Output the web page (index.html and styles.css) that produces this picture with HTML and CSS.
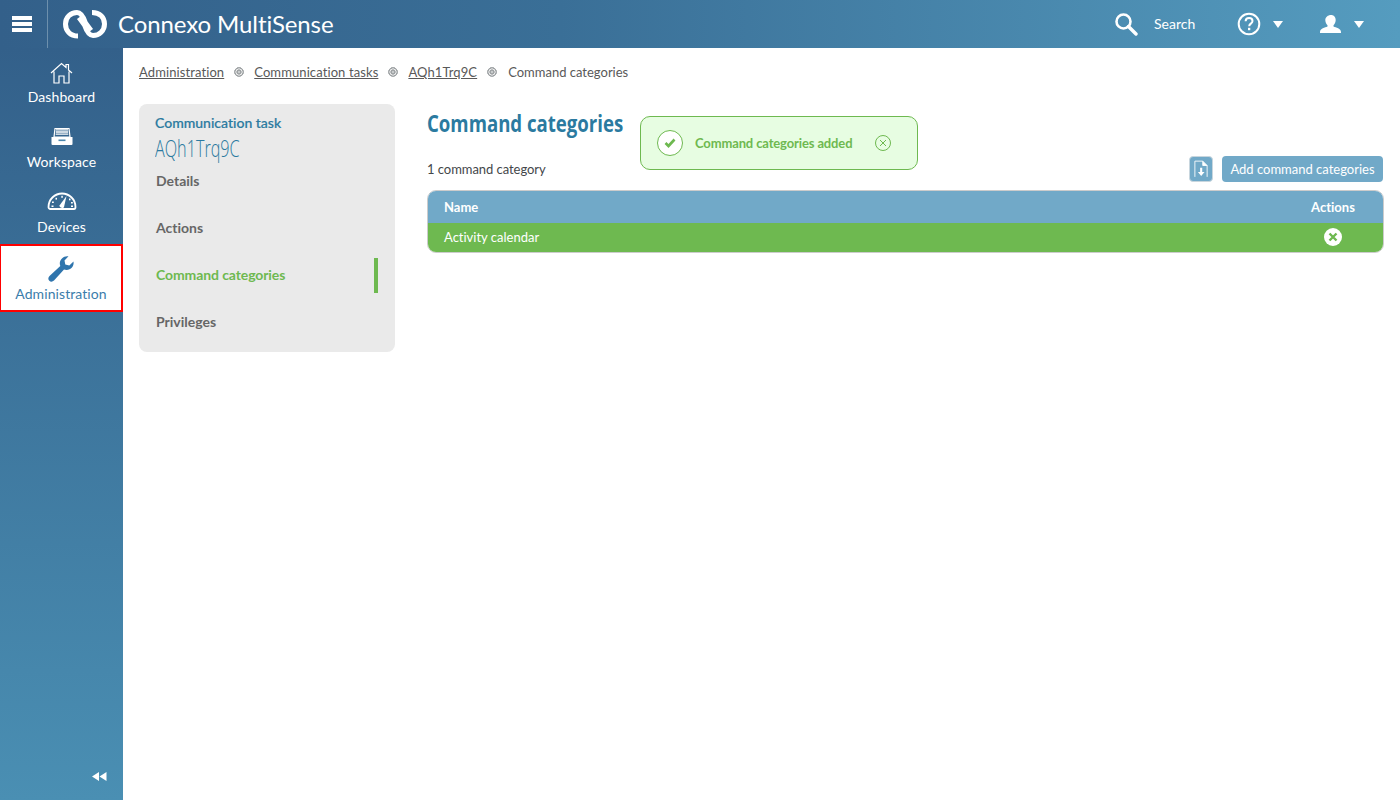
FILE: index.html
```html
<!DOCTYPE html>
<html lang="en">
<head>
<meta charset="utf-8">
<title>Command categories</title>
<link rel="stylesheet" href="styles.css">
</head>
<body>
<header class="topbar">
  <button class="burger" aria-label="Menu"><span></span><span></span><span></span></button>
  <div class="brand">
    <svg class="logo" width="46" height="30" viewBox="0 0 46 30"><path d="M16 27C8 27 3.500 21.500 3.500 15S8.500 3.500 15 3.500C19 3.500 21.500 8 23.500 14l5.500 7.500" fill="none" stroke="#fff" stroke-width="5"/><path d="M30 3.500C38 3.500 42.500 8.500 42.500 15S37.500 26.500 31 26.500C27 26.500 24.500 22 22.500 16l-5.500-7.500" fill="none" stroke="#fff" stroke-width="5"/></svg>
    <span class="brand-name">Connexo MultiSense</span>
  </div>
  <div class="top-actions">
    <div class="search">
      <svg width="24" height="24" viewBox="0 0 24 24"><circle cx="9.500" cy="9.500" r="7" fill="none" stroke="#fff" stroke-width="2.600"/><path d="M14.500 14.500L22 22" stroke="#fff" stroke-width="3.400" stroke-linecap="round"/></svg>
      <span class="search-text">Search</span>
    </div>
    <div class="help">
      <svg width="24" height="24" viewBox="0 0 24 24"><circle cx="12" cy="12" r="10.300" fill="none" stroke="#fff" stroke-width="2"/><path d="M8.600 9.300c0-2.100 1.500-3.300 3.500-3.300s3.400 1.200 3.400 3c0 2.700-3.300 2.600-3.300 5.200" fill="none" stroke="#fff" stroke-width="2"/><rect x="11" y="15.800" width="2.300" height="2.400" fill="#fff"/></svg>
      <i class="caret"></i>
    </div>
    <div class="user">
      <svg width="22" height="20" viewBox="0 0 22 20"><path d="M11 1c3 0 4.700 2.200 4.700 5 0 2.200-1 4.200-2.200 5.200v1.300c2.500 1 7.500 2 7.500 5.500v1H0v-1c0-3.500 5-4.500 7.500-5.500v-1.300C6.300 10.200 5.300 8.200 5.300 6c0-2.800 2.700-5 5.700-5z" fill="#fff"/></svg>
      <i class="caret"></i>
    </div>
  </div>
</header>
<div class="shell">
  <nav class="sidebar">
    <a class="nav-item">
      <svg width="24" height="24" viewBox="0 0 24 24"><path d="M1 12L11.500 2.500 16 6.500V3.500H18.500V9l3.500 3M4 10.500V22H9V15H14V22H19V10.500" fill="none" stroke="#fff" stroke-width="1.200"/></svg>
      <span>Dashboard</span>
    </a>
    <a class="nav-item">
      <svg width="24" height="24" viewBox="0 0 24 24"><path d="M5 2.500h14l1 8.500H4z" fill="none" stroke="#fff" stroke-width="1.200"/><path d="M6 3.800h12M5.900 6h12.200M5.700 8.200h12.600" stroke="#fff" stroke-width="1.300"/><path d="M1.500 11h21v7a1 1 0 0 1-1 1h-19a1 1 0 0 1-1-1z" fill="#fff"/><rect x="8.500" y="13.500" width="7" height="1.600" fill="#4a86ad"/></svg>
      <span>Workspace</span>
    </a>
    <a class="nav-item">
      <svg width="30" height="24" viewBox="0 0 30 24"><path d="M1.500 16C1.500 8 8 2.500 15 2.500S28.500 8 28.500 16c0 1-.5 2-1.500 2H3c-1 0-1.500-1-1.500-2z" fill="none" stroke="#fff" stroke-width="1.800"/><path d="M12.500 14.500L19.500 5 17 16c-.6 2-5 .6-4.500-1.500z" fill="#fff"/><g fill="#fff"><rect x="14.300" y="4.800" width="1.500" height="2"/><rect x="8.500" y="6.800" width="1.500" height="1.800"/><rect x="22" y="7.500" width="1.500" height="1.800"/><rect x="5" y="10.500" width="1.800" height="1.500"/><rect x="24" y="11" width="1.800" height="1.500"/><rect x="4.500" y="14.500" width="2" height="1.500"/><rect x="24" y="14.500" width="2" height="1.500"/></g></svg>
      <span>Devices</span>
    </a>
    <a class="nav-item active">
      <svg width="28" height="28" viewBox="0 0 28 28"><path d="M26.500 6.500c.8 4.500-2.500 8.500-7 8.500-1 0-1.800-.2-2.500-.5L7 25.500c-1.500 1.500-3.500 1.500-4.700.2C1 24.500 1 22.500 2.500 21l10.800-10c-.3-.8-.5-1.700-.5-2.500C12.800 4 17 .5 21.500 1.300l-4 4.200.8 4 4 .9z" fill="#2f75ad"/></svg>
      <span>Administration</span>
    </a>
    <svg class="collapse" width="15" height="9" viewBox="0 0 15 9"><path d="M0 4.500L7 0v9zM7.500 4.500L14.500 0v9z" fill="#fff"/></svg>
  </nav>
  <main class="content">
    <div class="crumbs">
      <a>Administration</a><i class="ring"></i>
      <a>Communication tasks</a><i class="ring"></i>
      <a>AQh1Trq9C</a><i class="ring"></i>
      <span class="crumb-current">Command categories</span>
    </div>
    <div class="columns">
      <aside class="panel">
        <div class="panel-label">Communication task</div>
        <div class="panel-name">AQh1Trq9C</div>
        <ul class="menu">
          <li>Details</li>
          <li>Actions</li>
          <li class="current">Command categories</li>
          <li>Privileges</li>
        </ul>
      </aside>
      <section class="main">
        <h1>Command categories</h1>
        <div class="toast">
          <span class="toast-check"><svg width="12" height="10" viewBox="0 0 12 10"><path d="M1.500 5l3 3 6-6.500" fill="none" stroke="#6eb950" stroke-width="2.600"/></svg></span>
          <span class="toast-text">Command categories added</span>
          <span class="toast-close"><svg width="8" height="8" viewBox="0 0 8 8"><path d="M1 1l6 6M7 1l-6 6" stroke="#6eb950" stroke-width="1"/></svg></span>
        </div>
        <div class="toolbar">
          <span class="count">1 command category</span>
          <div class="tools">
            <button class="icon-btn" aria-label="Export"><svg width="14" height="18" viewBox="0 0 16 20"><path d="M1 19V1h9l5 5v13" fill="none" stroke="#fff" stroke-width="1"/><path d="M10 1v5h5" fill="#fff" stroke="#fff"/><path d="M7 8.500h2.400v5H12L8.200 18 4.500 13.500H7z" fill="#fff"/></svg></button>
            <button class="add-btn">Add command categories</button>
          </div>
        </div>
        <div class="table">
          <div class="row head"><span>Name</span><span class="act">Actions</span></div>
          <div class="row body"><span class="cell">Activity calendar</span><span class="act"><span class="remove"><svg width="10" height="10" viewBox="0 0 10 10"><path d="M1.500 1.500l7 7M8.500 1.500l-7 7" stroke="#6eb950" stroke-width="2.400"/></svg></span></span></div>
        </div>
      </section>
    </div>
  </main>
</div>
</body>
</html>
```
FILE: styles.css
```css
* { box-sizing: border-box; }
html, body { margin: 0; height: 100%; }
body { font-family: Lato, "Liberation Sans", sans-serif; font-size: 13px; color: #595959; background: #fff; overflow: hidden; font-variant-ligatures: none; }
button { font-family: inherit; border: 0; padding: 0; }

.topbar { height: 48px; display: flex; align-items: center; background: linear-gradient(90deg, #33608a 0%, #3a6f97 40%, #559cbf 100%); color: #fff; }
.burger { width: 48px; height: 48px; background: none; border-right: 1px solid #6d90ad; display: flex; flex-direction: column; justify-content: center; gap: 2px; padding: 0 12px 0 12px; }
.burger span { display: block; width: 20px; height: 4px; background: #fff; }
.brand { display: flex; align-items: center; margin-left: 14px; gap: 10px; }
.logo { display: block; }
.brand-name { font-size: 24px; color: #fff; letter-spacing: -.1px; padding-bottom: 2px; }
.top-actions { margin-left: auto; margin-right: 11px; display: flex; align-items: center; }
.search { display: flex; align-items: center; gap: 16px; font-size: 14px; width: 123px; }
.search-text { padding-bottom: 2px; }
.help { display: flex; align-items: center; gap: 12px; width: 83px; }
.user { display: flex; align-items: center; gap: 12px; width: 69px; }
.caret { display: block; width: 0; height: 0; border-left: 5.500px solid transparent; border-right: 5.500px solid transparent; border-top: 7px solid #fff; }

.shell { display: flex; height: 752px; }
.sidebar { position: relative; width: 123px; flex: none; background: linear-gradient(180deg, #33608a 0%, #4a8fb3 100%); display: flex; flex-direction: column; }
.nav-item { height: 65px; display: flex; flex-direction: column; align-items: center; color: #fff; font-size: 14px; letter-spacing: .08px; padding-top: 13px; }
.nav-item svg { display: block; margin-bottom: 1px; }
.nav-item span { line-height: 18px; margin-top: 2px; }
.nav-item.active { height: 68px; background: #fff; color: #3b7dab; border: 2px solid #f00; border-left-width: 1px; padding-top: 9px; margin-top: 1px; }
.nav-item.active span { margin-top: 1px; }
.collapse { position: absolute; left: 92px; bottom: 19px; }

.content { flex: 1; padding: 16px 16px 0; min-width: 0; }
.crumbs { display: flex; align-items: center; height: 15px; font-size: 13px; color: #595959; }
.crumbs a { text-decoration: underline; letter-spacing: .1px; }
.crumb-current { margin-left: 1px; }
.ring { width: 10px; height: 10px; margin: 0 10px; border-radius: 50%; background: radial-gradient(circle, #c8cbcc 0 1px, #a0a4a6 1.400px 2.400px, #eee 2.800px 3.300px, #a0a4a6 3.800px 4.800px, #fff 5px); }
.columns { display: flex; gap: 32px; margin-top: 25px; }

.panel { width: 256px; height: 248px; flex: none; background: #eaeaea; border-radius: 8px; padding: 11px 17px 0 16px; }
.panel-label { font-size: 14px; line-height: 16px; font-weight: 500; color: #2b7aa0; -webkit-text-stroke: .2px #2b7aa0; }
.panel-name { font-family: "Open Sans", sans-serif; font-weight: 300; font-size: 24px; line-height: 28px; color: #2b7aa0; margin-top: 3px; transform: scaleX(.675); transform-origin: left center; white-space: nowrap; }
.menu { list-style: none; margin: -5px 0 0; padding: 0; }
.menu li { position: relative; height: 47px; display: flex; align-items: center; padding-left: 1px; font-size: 14px; font-weight: 700; color: #666; }
.menu .current { color: #6eb950; letter-spacing: -.1px; }
.menu .current::after { content: ""; position: absolute; right: 0; top: 7px; width: 4px; height: 35px; background: #6eb950; }

.main { position: relative; flex: 1; min-width: 0; }
h1 { margin: 0; font-family: "Open Sans", sans-serif; font-size: 24px; line-height: 38px; font-weight: 700; color: #2b7aa0; transform: scaleX(.775); transform-origin: left center; white-space: nowrap; }
.toast { position: absolute; left: 213px; top: 12px; width: 278px; height: 54px; display: flex; align-items: center; background: #e7fde2; border: 1px solid #6eb950; border-radius: 10px; color: #6eb950; padding-left: 16px; }
.toast-check { width: 26px; height: 26px; border: 1px solid #6eb950; border-radius: 50%; background: #fff; display: flex; align-items: center; justify-content: center; }
.toast-text { margin-left: 12px; font-weight: 700; font-size: 13px; letter-spacing: -.13px; }
.toast-close { margin-left: 23px; width: 16px; height: 16px; border: 1px solid #6eb950; border-radius: 50%; display: flex; align-items: center; justify-content: center; }

.toolbar { display: flex; align-items: center; justify-content: space-between; height: 26px; margin: 14px 1px 0 0; }
.count { color: #44474a; letter-spacing: -.05px; }
.tools { display: flex; gap: 9px; }
.icon-btn { width: 24px; height: 26px; background: #71a9c8; border: 1px solid #c8d6de; border-radius: 4px; display: flex; align-items: center; justify-content: center; }
.add-btn { width: 161px; height: 26px; background: #71a9c8; border-radius: 4px; color: #fff; font-size: 13px; }

.table { margin-top: 8px; width: 957px; border: 1px solid #ccc; border-radius: 9px; overflow: hidden; }
.row { display: flex; justify-content: space-between; align-items: center; padding: 0 28px 0 16px; color: #fff; }
.head { height: 32px; background: #71a9c8; font-weight: 700; }
.body { height: 29px; background: #6eb950; }
.cell { padding-bottom: 2px; }
.act { width: 44px; text-align: center; display: flex; justify-content: center; }
.remove { width: 18px; height: 18px; margin-bottom: 1px; border-radius: 50%; background: #fff; display: flex; align-items: center; justify-content: center; }
```
